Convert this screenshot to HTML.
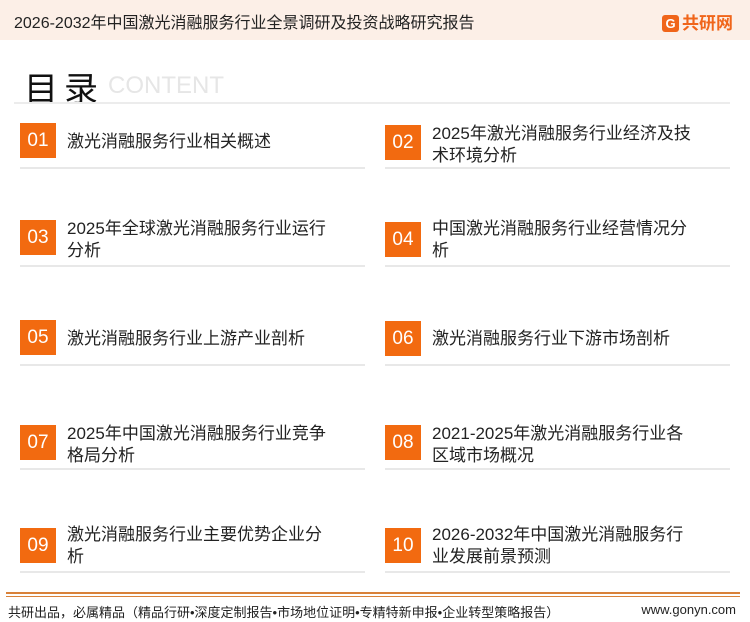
<!DOCTYPE html>
<html><head><meta charset="utf-8"><style>
body{margin:0;width:750px;height:622px;background:#fff;position:relative;overflow:hidden;font-family:"Liberation Sans","Noto Sans CJK SC",sans-serif;color:#222}
.hd{position:absolute;left:0;top:0;width:750px;height:40px;background:#fcefe7}
.hd .t{position:absolute;left:14px;top:9px;font-size:16px;color:#222}
.logo{position:absolute;left:662px;top:9px;font-size:17px;font-weight:bold;color:#f0651a}
.logo span{display:inline-block;width:17px;height:17px;background:#f0651a;color:#fff;border-radius:3px;font-size:13px;text-align:center;line-height:17px;margin-right:3px;vertical-align:1px}
.ml{position:absolute;left:24px;top:62px;font-size:34px;color:#111;letter-spacing:6px}
.ct{position:absolute;left:108px;top:72px;font-size:24px;color:#e6e6e6}
.dv{position:absolute;left:14px;top:102px;width:716px;height:2px;background:#ececec}
.bx{position:absolute;width:36px;height:35px;background:#f26a10;color:#fff;font-size:19px;text-align:center;line-height:35px}
.tx{position:absolute;font-size:17px;line-height:22px;white-space:nowrap;color:#222}
.ul{position:absolute;height:2px;background:#e8e8e8;width:345px}
.fl{position:absolute;left:6px;width:734px;height:2px;background:#d9823a}
.ft{position:absolute;left:8px;top:602px;font-size:13px;color:#222}
.fr{position:absolute;right:14px;top:602px;font-size:13px;color:#222}
</style></head><body>
<div class="hd"><div class="t">2026-2032年中国激光消融服务行业全景调研及投资战略研究报告</div><div class="logo"><span>G</span>共研网</div></div>
<div class="ml">目录</div><div class="ct">CONTENT</div>
<div class="dv"></div>

<div class="bx" style="left:20px;top:123px">01</div><div class="tx" style="left:67px;top:131px">激光消融服务行业相关概述</div><div class="ul" style="left:20px;top:167px"></div>
<div class="bx" style="left:385px;top:125px">02</div><div class="tx" style="left:432px;top:123px">2025年激光消融服务行业经济及技<br>术环境分析</div><div class="ul" style="left:385px;top:167px"></div>

<div class="bx" style="left:20px;top:220px">03</div><div class="tx" style="left:67px;top:218px">2025年全球激光消融服务行业运行<br>分析</div><div class="ul" style="left:20px;top:265px"></div>
<div class="bx" style="left:385px;top:222px">04</div><div class="tx" style="left:432px;top:218px">中国激光消融服务行业经营情况分<br>析</div><div class="ul" style="left:385px;top:265px"></div>

<div class="bx" style="left:20px;top:320px">05</div><div class="tx" style="left:67px;top:328px">激光消融服务行业上游产业剖析</div><div class="ul" style="left:20px;top:364px"></div>
<div class="bx" style="left:385px;top:321px">06</div><div class="tx" style="left:432px;top:328px">激光消融服务行业下游市场剖析</div><div class="ul" style="left:385px;top:364px"></div>

<div class="bx" style="left:20px;top:425px">07</div><div class="tx" style="left:67px;top:423px">2025年中国激光消融服务行业竞争<br>格局分析</div><div class="ul" style="left:20px;top:468px"></div>
<div class="bx" style="left:385px;top:425px">08</div><div class="tx" style="left:432px;top:423px">2021-2025年激光消融服务行业各<br>区域市场概况</div><div class="ul" style="left:385px;top:468px"></div>

<div class="bx" style="left:20px;top:528px">09</div><div class="tx" style="left:67px;top:524px">激光消融服务行业主要优势企业分<br>析</div><div class="ul" style="left:20px;top:571px"></div>
<div class="bx" style="left:385px;top:528px">10</div><div class="tx" style="left:432px;top:524px">2026-2032年中国激光消融服务行<br>业发展前景预测</div><div class="ul" style="left:385px;top:571px"></div>

<div class="fl" style="top:592px"></div><div class="fl" style="top:596px;height:1px"></div>
<div class="ft">共研出品，必属精品（精品行研•深度定制报告•市场地位证明•专精特新申报•企业转型策略报告）</div>
<div class="fr">www.gonyn.com</div>
</body></html>
